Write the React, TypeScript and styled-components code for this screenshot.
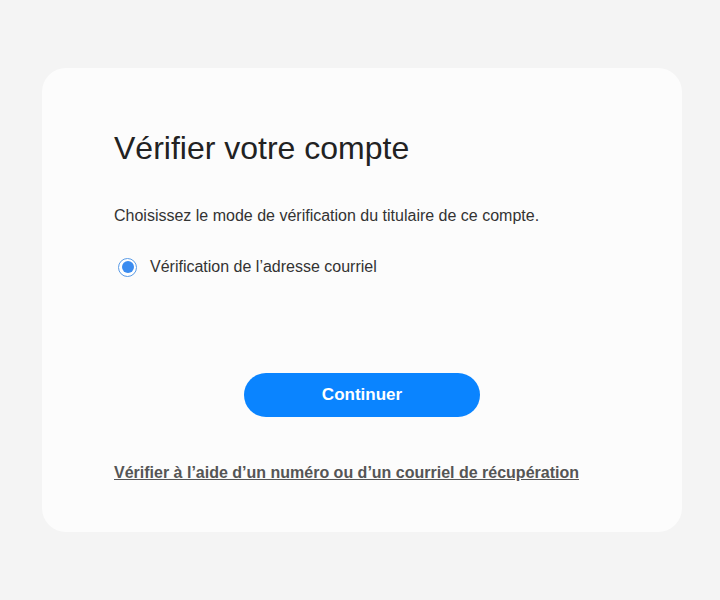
import React, { FC } from "react";
import styled, { createGlobalStyle } from "styled-components";

const GlobalStyle = createGlobalStyle`
  html, body {
    margin: 0;
    padding: 0;
    background: #f4f4f4;
    font-family: "Liberation Sans", Arial, sans-serif;
  }
`;

const App: FC = () => {
  return (
    <>
      <GlobalStyle />
      <SPage>
        <SCard>
          <STitle>Vérifier votre compte</STitle>
          <SIntro>Choisissez le mode de vérification du titulaire de ce compte.</SIntro>
          <SOption>
            <SRadio type="radio" name="mode" defaultChecked />
            <span>Vérification de l’adresse courriel</span>
          </SOption>
          <SActions>
            <SButton type="button">Continuer</SButton>
          </SActions>
          <SLink href="#">Vérifier à l’aide d’un numéro ou d’un courriel de récupération</SLink>
        </SCard>
      </SPage>
    </>
  );
};

const SPage = styled.div`
  width: 720px;
  height: 600px;
  padding: 68px 38px 0 42px;
  box-sizing: border-box;
`;

const SCard = styled.div`
  width: 640px;
  height: 464px;
  box-sizing: border-box;
  background: #fcfcfc;
  border-radius: 24px;
  padding: 62px 72px 0;
  display: flex;
  flex-direction: column;
`;

const STitle = styled.h1`
  margin: 0;
  font-size: 32px;
  font-weight: 400;
  line-height: 36px;
  color: #222;
`;

const SIntro = styled.p`
  margin: 40px 0 0;
  font-size: 16px;
  line-height: 20px;
  color: #333;
`;

const SOption = styled.label`
  margin-top: 31px;
  display: flex;
  align-items: center;
  gap: 13px;
  font-size: 16px;
  line-height: 20px;
  color: #333;
`;

const SRadio = styled.input`
  appearance: none;
  margin: 0 0 0 4px;
  width: 19px;
  height: 19px;
  border: 1.5px solid #5a9be6;
  border-radius: 50%;
  background: #fff;
  display: grid;
  place-items: center;
  box-sizing: border-box;
  &:checked::after {
    content: "";
    width: 12px;
    height: 12px;
    border-radius: 50%;
    background: #3b8cf0;
  }
`;

const SActions = styled.div`
  margin-top: 96px;
  display: flex;
  justify-content: center;
`;

const SButton = styled.button`
  width: 236px;
  height: 44px;
  border: none;
  border-radius: 22px;
  background: #0a84ff;
  color: #fff;
  font-family: inherit;
  font-size: 17px;
  font-weight: 700;
  cursor: pointer;
`;

const SLink = styled.a`
  margin-top: 46px;
  align-self: flex-start;
  font-size: 16px;
  font-weight: 700;
  line-height: 20px;
  color: #555;
  text-decoration: underline;
`;

export default App;
